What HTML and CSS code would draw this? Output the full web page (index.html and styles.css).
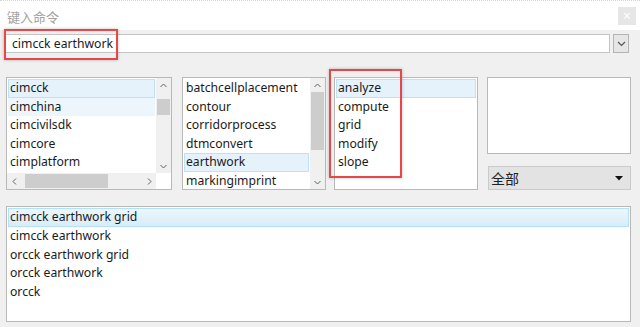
FILE: index.html
```html
<!DOCTYPE html>
<html lang="zh">
<head>
    <meta charset="UTF-8">
    <title>键入命令</title>
    <link rel="stylesheet" href="styles.css">
</head>
<body>
<div class="dialog">
    <div class="titlebar">
        <span class="title">键入命令</span>
        <span class="close">&times;</span>
    </div>

    <div class="cmd-row">
        <div class="cmd-input">cimcck earthwork</div>
        <div class="cmd-drop">
            <svg width="9" height="6" viewBox="0 0 9 6"><polyline points="1,1 4.5,4.5 8,1" fill="none" stroke="#555" stroke-width="1.2"/></svg>
        </div>
    </div>

    <div class="lists">
        <div class="list list-first">
            <div class="list-main">
                <ul class="items">
                    <li class="sel">cimcck</li>
                    <li class="hover">cimchina</li>
                    <li>cimcivilsdk</li>
                    <li>cimcore</li>
                    <li>cimplatform</li>
                </ul>
                <div class="vscroll">
                    <div class="sb-btn"><svg width="7" height="5" viewBox="0 0 7 5"><polyline points="0.5,4 3.5,1 6.5,4" fill="none" stroke="#606060"/></svg></div>
                    <div class="sb-track"><div class="sb-thumb thumb-first"></div></div>
                    <div class="sb-btn"><svg width="7" height="5" viewBox="0 0 7 5"><polyline points="0.5,1 3.5,4 6.5,1" fill="none" stroke="#606060"/></svg></div>
                </div>
            </div>
            <div class="hscroll-row">
                <div class="hscroll">
                    <div class="sb-hbtn"><svg width="5" height="7" viewBox="0 0 5 7"><polyline points="4,0.5 1,3.5 4,6.5" fill="none" stroke="#606060"/></svg></div>
                    <div class="sb-htrack"><div class="sb-hthumb"></div></div>
                    <div class="sb-hbtn"><svg width="5" height="7" viewBox="0 0 5 7"><polyline points="1,0.5 4,3.5 1,6.5" fill="none" stroke="#606060"/></svg></div>
                </div>
                <div class="corner"></div>
            </div>
        </div>

        <div class="list list-mid">
            <div class="list-main">
                <ul class="items">
                    <li>batchcellplacement</li>
                    <li>contour</li>
                    <li>corridorprocess</li>
                    <li>dtmconvert</li>
                    <li class="sel">earthwork</li>
                    <li>markingimprint</li>
                </ul>
                <div class="vscroll">
                    <div class="sb-btn"><svg width="7" height="5" viewBox="0 0 7 5"><polyline points="0.5,4 3.5,1 6.5,4" fill="none" stroke="#606060"/></svg></div>
                    <div class="sb-track"><div class="sb-thumb thumb-mid"></div></div>
                    <div class="sb-btn"><svg width="7" height="5" viewBox="0 0 7 5"><polyline points="0.5,1 3.5,4 6.5,1" fill="none" stroke="#606060"/></svg></div>
                </div>
            </div>
        </div>

        <div class="list list-keys">
            <ul class="items">
                <li class="sel">analyze</li>
                <li>compute</li>
                <li>grid</li>
                <li>modify</li>
                <li>slope</li>
            </ul>
        </div>

        <div class="side">
            <div class="preview"></div>
            <div class="filter">
                <span>全部</span>
                <svg width="8" height="5" viewBox="0 0 8 5"><polygon points="0,0 8,0 4,4.5" fill="#111"/></svg>
            </div>
        </div>
    </div>

    <div class="list history">
        <ul class="items">
            <li class="sel-grad">cimcck earthwork grid</li>
            <li>cimcck earthwork</li>
            <li>orcck earthwork grid</li>
            <li>orcck earthwork</li>
            <li>orcck</li>
        </ul>
    </div>

    <!-- annotation boxes -->
    <div class="mark mark-cmd"></div>
    <div class="mark mark-keys"></div>
</div>
</body>
</html>
```

FILE: styles.css
```css
* {
    box-sizing: border-box;
}

body {
    margin: 0;
    background-color: #f0f0f0;
    font-family: "Noto Sans", "Noto Sans CJK SC", sans-serif;
    font-size: 12.2px;
    color: #1a1a1a;
}

.dialog {
    position: relative;
    width: 640px;
    height: 327px;
    overflow: hidden;
}

.titlebar {
    height: 30px;
    background-color: #fff;
    border-top: 1px dotted #d4d4d4;
    display: flex;
    align-items: center;
    justify-content: space-between;
    padding-left: 7px;
}
.title {
    color: #a2a2a2;
    font-family: "Noto Sans CJK SC", sans-serif;
    font-size: 13px;
    padding-top: 1px;
}
.close {
    width: 18px;
    height: 18px;
    margin-right: 4px;
    background-color: #e6e6e6;
    color: #fff;
    font-size: 14px;
    line-height: 18px;
    text-align: center;
}

.cmd-row {
    display: flex;
    gap: 3px;
    height: 19px;
    margin: 4px 11px 0 5px;
}
.cmd-input {
    flex: 1;
    background-color: #fff;
    border: 1px solid #c4c4c4;
    padding-left: 6px;
    line-height: 17px;
}
.cmd-drop {
    width: 16px;
    background-color: #e6e6e6;
    border: 1px solid #b4b4b4;
    display: flex;
    align-items: center;
    justify-content: center;
}

.lists {
    display: flex;
    height: 113px;
    margin: 24px 9px 0 6px;
}

.list {
    background-color: #fff;
    border: 1px solid #b9b9b9;
}
.list-first {
    width: 166px;
    display: flex;
    flex-direction: column;
}
.list-mid {
    width: 144px;
    margin-left: 10px;
}
.list-keys {
    width: 144px;
    margin-left: 8px;
}
.list-main {
    display: flex;
    height: 100%;
}
.list-first .list-main {
    height: 95px;
}

.items {
    list-style: none;
    margin: 0;
    padding: 1px 1px 0;
    flex: 1;
    overflow: hidden;
}
.items li {
    height: 18.5px;
    line-height: 16.5px;
    border: 1px solid transparent;
    padding: 0 1px;
    white-space: nowrap;
}
.items li.sel {
    background-color: #e5f2fc;
    border-color: #bfe1f8;
}
.items li.hover {
    background-color: #edf6fd;
}

.vscroll {
    width: 15px;
    background-color: #f0f0f0;
    display: flex;
    flex-direction: column;
}
.sb-btn {
    height: 14px;
    display: flex;
    align-items: center;
    justify-content: center;
}
.sb-track {
    flex: 1;
}
.sb-thumb {
    margin: 0 1px;
    background-color: #cdcdcd;
}
.thumb-first {
    margin-top: 7px;
    height: 16px;
}
.thumb-mid {
    height: 58px;
}

.hscroll-row {
    display: flex;
    height: 16px;
}
.hscroll {
    flex: 1;
    display: flex;
    background-color: #f0f0f0;
}
.sb-hbtn {
    width: 14px;
    display: flex;
    align-items: center;
    justify-content: center;
}
.sb-htrack {
    flex: 1;
    padding: 1px 0;
}
.sb-hthumb {
    margin-left: 4px;
    width: 83px;
    height: 100%;
    background-color: #cdcdcd;
}
.corner {
    width: 15px;
    background-color: #fff;
}

.side {
    width: 144px;
    margin-left: 9px;
    display: flex;
    flex-direction: column;
}
.preview {
    height: 77px;
    background-color: #fff;
    border: 1px solid #b9b9b9;
}
.filter {
    height: 24px;
    margin-top: 12px;
    margin-left: 1px;
    background-color: #e3e3e3;
    border: 1px solid #cacaca;
    display: flex;
    align-items: center;
    justify-content: space-between;
    padding: 0 7px 0 2px;
    font-family: "Noto Sans CJK SC", sans-serif;
    font-size: 14px;
    color: #222;
}

.history {
    height: 116px;
    margin: 16px 9px 0 6px;
}
.history .items li {
    height: 18.75px;
    line-height: 16.75px;
}
.items li.sel-grad {
    background: linear-gradient(#ecf7fd, #d8ecf8);
    border-color: #b5e0fa;
}

.mark {
    position: absolute;
    border: 2px solid #e8474a;
    box-shadow: 0 0 3px rgba(0, 0, 0, 0.25);
}
.mark-cmd {
    left: 4px;
    top: 29px;
    width: 114px;
    height: 31px;
}
.mark-keys {
    left: 329px;
    top: 69px;
    width: 73px;
    height: 109px;
}
```
